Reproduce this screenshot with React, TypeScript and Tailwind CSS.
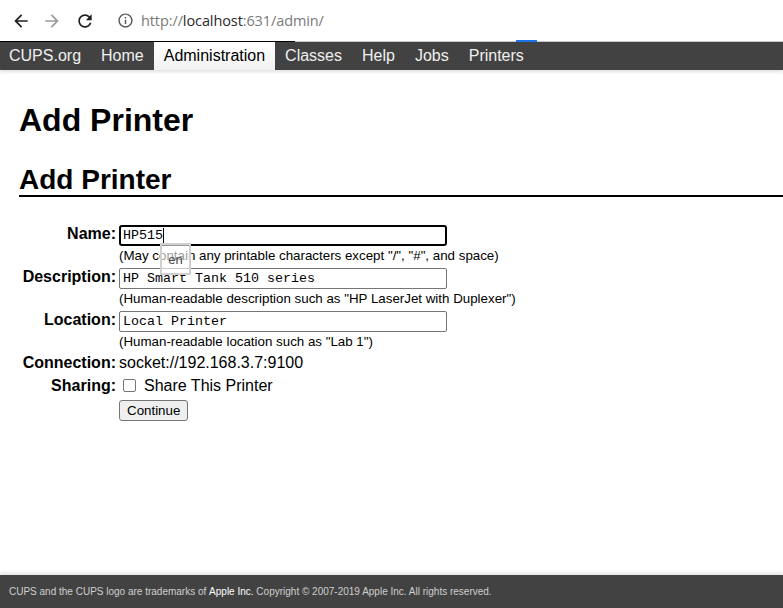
import React from "react";

const navItems = ["CUPS.org", "Home", "Administration", "Classes", "Help", "Jobs", "Printers"];

function BrowserBar() {
  return (
    <div className="relative h-[41px] bg-white flex items-center font-['Open_Sans',sans-serif]">
      <svg viewBox="0 0 24 24" className="ml-[11px] w-[20px] h-[20px] fill-[#1f1f1f]">
        <path d="M20 11H7.83l5.59-5.59L12 4l-8 8 8 8 1.41-1.41L7.83 13H20v-2z" />
      </svg>
      <svg viewBox="0 0 24 24" className="ml-[11px] w-[20px] h-[20px] fill-[#9a9a9a]">
        <path d="M4 11h12.17l-5.59-5.59L12 4l8 8-8 8-1.41-1.41L16.17 13H4v-2z" />
      </svg>
      <svg viewBox="0 0 24 24" className="ml-[13px] w-[20px] h-[20px] fill-[#1f1f1f]">
        <path d="M17.65 6.35C16.2 4.9 14.21 4 12 4c-4.42 0-7.99 3.58-7.99 8s3.57 8 7.99 8c3.73 0 6.84-2.55 7.730-6h-2.08c-.82 2.33-3.04 4-5.65 4-3.31 0-6-2.69-6-6s2.69-6 6-6c1.66 0 3.14.69 4.22 1.78L13 11h7V4l-2.35 2.35z" />
      </svg>
      <svg viewBox="0 0 24 24" className="ml-[22px] w-[17px] h-[17px] fill-[#555]">
        <path d="M11 7h2v2h-2zm0 4h2v6h-2zm1-9C6.48 2 2 6.48 2 12s4.48 10 10 10 10-4.48 10-10S17.52 2 12 2zm0 18c-4.41 0-8-3.59-8-8s3.59-8 8-8 8 3.59 8 8-3.59 8-8 8z" />
      </svg>
      <div className="ml-[7px] text-[14.5px] text-[#7a7a7a] tracking-[-0.1px]">
        http://<span className="text-[#2a2a2a]">localhost</span>:631/admin/
      </div>
      {/* loading line */}
      <div className="absolute left-0 right-0 bottom-[-1px] h-px bg-[#c8c8c8]">
        <div className="absolute left-0 top-0 h-px w-[295px] bg-black" />
        <div className="absolute left-[516px] top-[-1px] h-[2px] w-[21px] bg-[#1a73e8]" />
      </div>
    </div>
  );
}

function Field({ label, value, help, focused }: { label: string; value: string; help: string; focused?: boolean }) {
  return (
    <>
      <div className="text-right font-bold text-[16px] leading-[19px] -mt-px">{label}</div>
      <div className="flex flex-col">
        <div
          className={
            focused
              ? "h-[21px] w-[328px] border-2 border-black rounded-[3px] px-[2px] flex items-center font-['Liberation_Mono',monospace] text-[13.33px]"
              : "h-[21px] w-[328px] border border-[#767676] rounded-[2px] px-[3px] flex items-center font-['Liberation_Mono',monospace] text-[13.33px]"
          }
        >
          {value}
          {focused && <span className="inline-block w-px h-[15px] bg-black" />}
        </div>
        <div className="text-[13.33px] leading-[18px] mt-px -mb-px">{help}</div>
      </div>
    </>
  );
}

export default function App() {
  return (
    <div className="h-[608px] flex flex-col bg-white text-black font-['Liberation_Sans',Arial,sans-serif] overflow-hidden">
      <BrowserBar />
      <nav className="mt-px h-[28px] bg-[#424242] flex items-stretch text-[16px] text-[#f0f0f0] shadow-[0_2px_3px_rgba(0,0,0,0.12)]">
        {navItems.map((item, i) => (
          <div
            key={item}
            className={
              (i === 0 ? "pl-[9px] pr-[10px] " : "px-[10px] ") +
              (item === "Administration"
                ? "flex items-center bg-gradient-to-b from-white to-[#f2f2f2] text-black"
                : "flex items-center")
            }
          >
            {item}
          </div>
        ))}
      </nav>

      <main className="flex-1 relative">
        <h1 className="ml-[19px] mt-[32px] text-[32px] leading-[37px] font-bold">Add Printer</h1>
        <h2 className="ml-[19px] mt-[25px] text-[28px] leading-[31px] font-bold border-b-2 border-black">Add Printer</h2>

        <div className="ml-[19px] mt-[28px] grid grid-cols-[97px_auto] gap-x-[3px] gap-y-[4px] items-start">
          <Field label="Name:" value="HP515" focused help={'(May contain any printable characters except "/", "#", and space)'} />
          <Field label="Description:" value="HP Smart Tank 510 series" help={'(Human-readable description such as "HP LaserJet with Duplexer")'} />
          <Field label="Location:" value="Local Printer" help={'(Human-readable location such as "Lab 1")'} />

          <div className="text-right font-bold text-[16px] leading-[18px]">Connection:</div>
          <div className="text-[16px] leading-[18px]">socket://192.168.3.7:9100</div>

          <div className="text-right font-bold text-[16px] leading-[21px] -mt-px">Sharing:</div>
          <label className="flex items-center h-[21px] text-[16px] -mt-px">
            <span className="ml-[4px] mr-[8px] w-[13px] h-[13px] border border-[#767676] rounded-[2px] bg-white" />
            Share This Printer
          </label>

          <div />
          <div className="-mt-[2px]">
            <button className="h-[21px] px-[7px] border border-[#767676] rounded-[3px] bg-[#efefef] text-[13.33px] leading-[17px]">
              Continue
            </button>
          </div>
        </div>

        {/* input language tooltip */}
        <div className="absolute left-[160px] top-[173px] w-[31px] h-[32px] border-2 border-[#d0d0d0] bg-white/60 flex items-end justify-center pb-[4px] text-[13px] text-[#444]">
          en
        </div>
      </main>

      <footer className="h-[33px] bg-[#424242] flex items-center pl-[9px] text-[10px] text-[#cfcfcf] shadow-[0_-2px_4px_rgba(0,0,0,0.12)]">
        CUPS and the CUPS logo are trademarks of&nbsp;<span className="text-white">Apple Inc.</span>&nbsp;Copyright © 2007-2019 Apple Inc. All rights reserved.
      </footer>
    </div>
  );
}
